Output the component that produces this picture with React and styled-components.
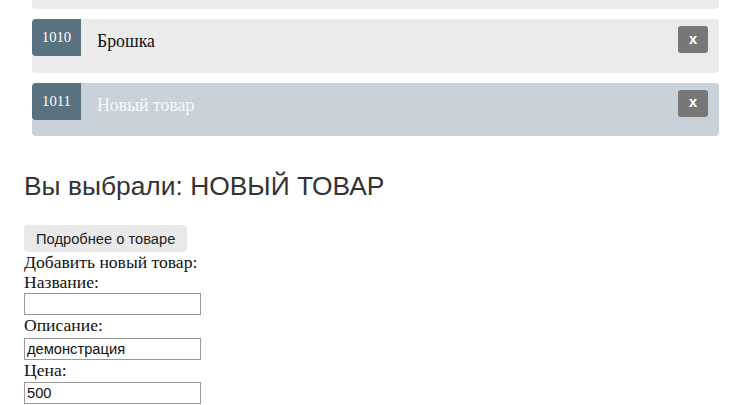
import styled, { createGlobalStyle } from 'styled-components'

const GlobalStyle = createGlobalStyle`
  body {
    margin: 0;
    background: #fff;
    font-family: "Liberation Serif", "Times New Roman", serif;
    font-size: 17.6px;
    overflow: hidden;
  }
`

const Page = styled.div`
  padding: 0 20px 0 24px;
`

const ProductList = styled.ul`
  list-style: none;
  margin: -44.5px 0 0;
  padding: 0 8px;
  display: flex;
  flex-direction: column;
  gap: 10px;
`

const Card = styled.li`
  display: flex;
  align-items: flex-start;
  height: 53.5px;
  padding-right: 11px;
  border-radius: 4px;
  background: ${p => (p.$active ? '#c9d2d8' : '#ebebeb')};
`

const Badge = styled.span`
  flex: 0 0 49px;
  height: 37px;
  display: flex;
  align-items: center;
  justify-content: center;
  background: #5a717f;
  color: #fff;
  font-size: 14.7px;
  border-radius: 4px 0 0 4px;
`

const Title = styled.span`
  flex: 1;
  padding: 12px 0 0 16px;
  line-height: 20px;
  font-size: 17.8px;
  color: ${p => (p.$active ? '#f7f9fa' : '#111')};
`

const RemoveButton = styled.button`
  margin-top: 7px;
  width: 30px;
  height: 27px;
  border: none;
  border-radius: 3px;
  background: #777;
  color: #fff;
  font: bold 14.7px "Liberation Sans", Arial, sans-serif;
  padding: 0 0 2px;
  cursor: pointer;
`

const Heading = styled.h2`
  margin: 35px 0 0;
  font: normal 26.4px/30px "Liberation Sans", Arial, sans-serif;
  color: #333;
`

const DetailsButton = styled.button`
  display: block;
  margin-top: 24px;
  height: 27px;
  padding: 0 12px;
  border: none;
  border-radius: 4px;
  background: #e9e9e9;
  color: #222;
  font: 14.7px "Liberation Sans", Arial, sans-serif;
`

const Form = styled.form`
  display: flex;
  flex-direction: column;
  align-items: flex-start;
`

const Line = styled.div`
  line-height: 20.2px;
  color: #111;
`

const Input = styled.input`
  box-sizing: border-box;
  width: 177px;
  height: 22px;
  margin: ${p => (p.$first ? '1px' : '2px')} 0 0;
  padding: 0 2px;
  border: 1px solid #999;
  font: 14.7px "Liberation Sans", Arial, sans-serif;
  color: #111;
  outline: none;
`

const products = [
  { id: 1010, name: 'Брошка' },
  { id: 1011, name: 'Новый товар', active: true },
]

export default function App() {
  return (
    <Page>
      <GlobalStyle />
      <ProductList>
        {/* the item above, scrolled out of view except its bottom edge */}
        <Card aria-hidden="true" />
        {products.map(p => (
          <Card key={p.id} $active={p.active}>
            <Badge>{p.id}</Badge>
            <Title $active={p.active}>{p.name}</Title>
            <RemoveButton>x</RemoveButton>
          </Card>
        ))}
      </ProductList>
      <Heading>Вы выбрали: НОВЫЙ ТОВАР</Heading>
      <DetailsButton>Подробнее о товаре</DetailsButton>
      <Form onSubmit={e => e.preventDefault()}>
        <Line>Добавить новый товар:</Line>
        <Line>Название:</Line>
        <Input $first defaultValue="" />
        <Line>Описание:</Line>
        <Input defaultValue="демонстрация" />
        <Line>Цена:</Line>
        <Input defaultValue="500" />
      </Form>
    </Page>
  )
}
